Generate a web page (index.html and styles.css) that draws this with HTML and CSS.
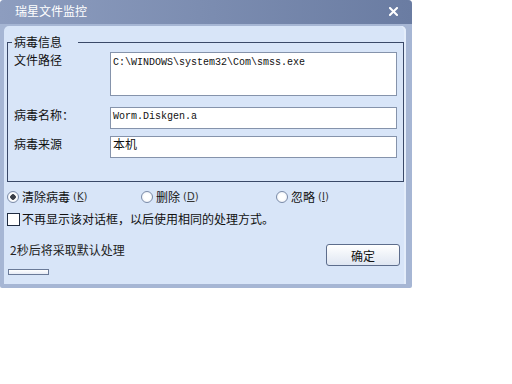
FILE: index.html
```html
<!DOCTYPE html>
<html lang="zh-CN">
<head>
  <meta charset="UTF-8" />
  <title>瑞星文件监控</title>
  <link rel="stylesheet" href="styles.css">
</head>
<body>
  <div class="dialog">
    <div class="titlebar">
      <span class="title">瑞星文件监控</span>
      <svg class="close" width="9" height="9" viewBox="0 0 9 9">
        <path d="M1 1 L8 8 M8 1 L1 8" stroke="#fff" stroke-width="2" stroke-linecap="square" />
      </svg>
    </div>

    <div class="panel">
      <fieldset class="group">
        <legend>病毒信息</legend>
        <div class="row">
          <label>文件路径</label>
          <div class="field field-tall mono">C:\WINDOWS\system32\Com\smss.exe</div>
        </div>
        <div class="row row-name">
          <label>病毒名称：</label>
          <div class="field mono">Worm.Diskgen.a</div>
        </div>
        <div class="row row-source">
          <label>病毒来源</label>
          <div class="field field-cjk">本机</div>
        </div>
      </fieldset>

      <div class="choices">
        <div class="choice"><span class="radio checked"></span>清除病毒<span class="key">(<u>K</u>)</span></div>
        <div class="choice"><span class="radio"></span>删除<span class="key">(<u>D</u>)</span></div>
        <div class="choice"><span class="radio"></span>忽略<span class="key">(<u>I</u>)</span></div>
      </div>

      <div class="check"><span class="box"></span>不再显示该对话框，以后使用相同的处理方式。</div>

      <div class="footer">
        <span class="countdown">2秒后将采取默认处理</span>
        <button class="ok">确定</button>
      </div>

      <div class="progress"></div>
    </div>
  </div>
</body>
</html>
```

FILE: styles.css
```css
* {
  box-sizing: border-box;
}

html, body {
  margin: 0;
  padding: 0;
  background: #fff;
  font-family: "Noto Sans CJK SC", sans-serif;
  font-size: 12px;
  color: #111;
}

.dialog {
  width: 412px;
  height: 288px;
  background: #a6b6d4;
  border-radius: 4px 4px 2px 2px;
  display: flex;
  flex-direction: column;
}

.titlebar {
  height: 24px;
  flex: none;
  display: flex;
  align-items: center;
  justify-content: space-between;
  padding: 0 14px 2px 15px;
  background: linear-gradient(to right, #8d9dbf, #6a7ca2);
  border-radius: 4px 4px 0 0;
  color: #fff;
  line-height: 16px;
}

.close {
  display: block;
}

.panel {
  flex: 1;
  margin: 2px 6px 4px 4px;
  padding-top: 8px;
  background: #d8e5f8;
  border-radius: 5px 5px 0 0;
  box-shadow: inset -2px 0 0 #e4edfa;
}

/* group box */
.group {
  margin: 0 2px 0 3px;
  padding: 2px 6px 23px 4px;
  border: 1px solid #3a4968;
  min-width: 0;
}

.group legend {
  padding: 0 16px 0 2px;
  line-height: 16px;
}

.row {
  display: flex;
  align-items: flex-start;
  padding-left: 2px;
}

.row label {
  width: 96px;
  flex: none;
  line-height: 16px;
}

.row-name {
  margin-top: 11px;
}

.row-source {
  margin-top: 7px;
}

.field {
  flex: 1;
  height: 22px;
  padding: 2px 2px 0;
  background: #fff;
  border: 1px solid #8593ab;
  line-height: 14px;
}

.field-tall {
  height: 44px;
  padding-top: 3px;
}

.field-cjk {
  padding-top: 0;
}

.mono {
  font-family: "Liberation Mono", monospace;
  font-size: 10px;
}

/* options */
.choices {
  display: grid;
  grid-template-columns: 134px 135px auto;
  margin-top: 7px;
  padding-left: 3px;
  line-height: 16px;
}

.choice {
  display: flex;
  align-items: center;
}

.radio {
  width: 12px;
  height: 12px;
  margin-right: 3px;
  border: 1px solid #7b8ba8;
  border-radius: 50%;
  background: radial-gradient(circle, #fff 40%, #e3e9f3);
}

.radio.checked {
  background: radial-gradient(circle, #3a3f48 0 2.5px, #fff 3px, #e3e9f3);
}

.key {
  margin-left: 3px;
  font-family: "DejaVu Sans", sans-serif;
  font-size: 10px;
  color: #333;
}

.check {
  display: flex;
  align-items: center;
  margin-top: 6px;
  padding-left: 3px;
  line-height: 16px;
}

.box {
  width: 13px;
  height: 13px;
  margin-right: 2px;
  background: #fff;
  border: 1px solid #1f2b40;
}

/* footer */
.footer {
  display: flex;
  justify-content: space-between;
  align-items: flex-start;
  margin-top: 15px;
  padding: 0 6px 0 6px;
}

.countdown {
  line-height: 16px;
  color: #222;
}

.ok {
  width: 74px;
  height: 22px;
  margin-top: 2px;
  padding: 0;
  font-family: inherit;
  font-size: 12px;
  color: #111;
  background: linear-gradient(#fff, #dfe6f2);
  border: 1px solid #5d6d8c;
  border-radius: 3px;
}

.progress {
  width: 41px;
  height: 6px;
  margin: 3px 0 0 4px;
  border: 1px solid #6a7a98;
  background: linear-gradient(#fff, #e6ebf6);
}
```
